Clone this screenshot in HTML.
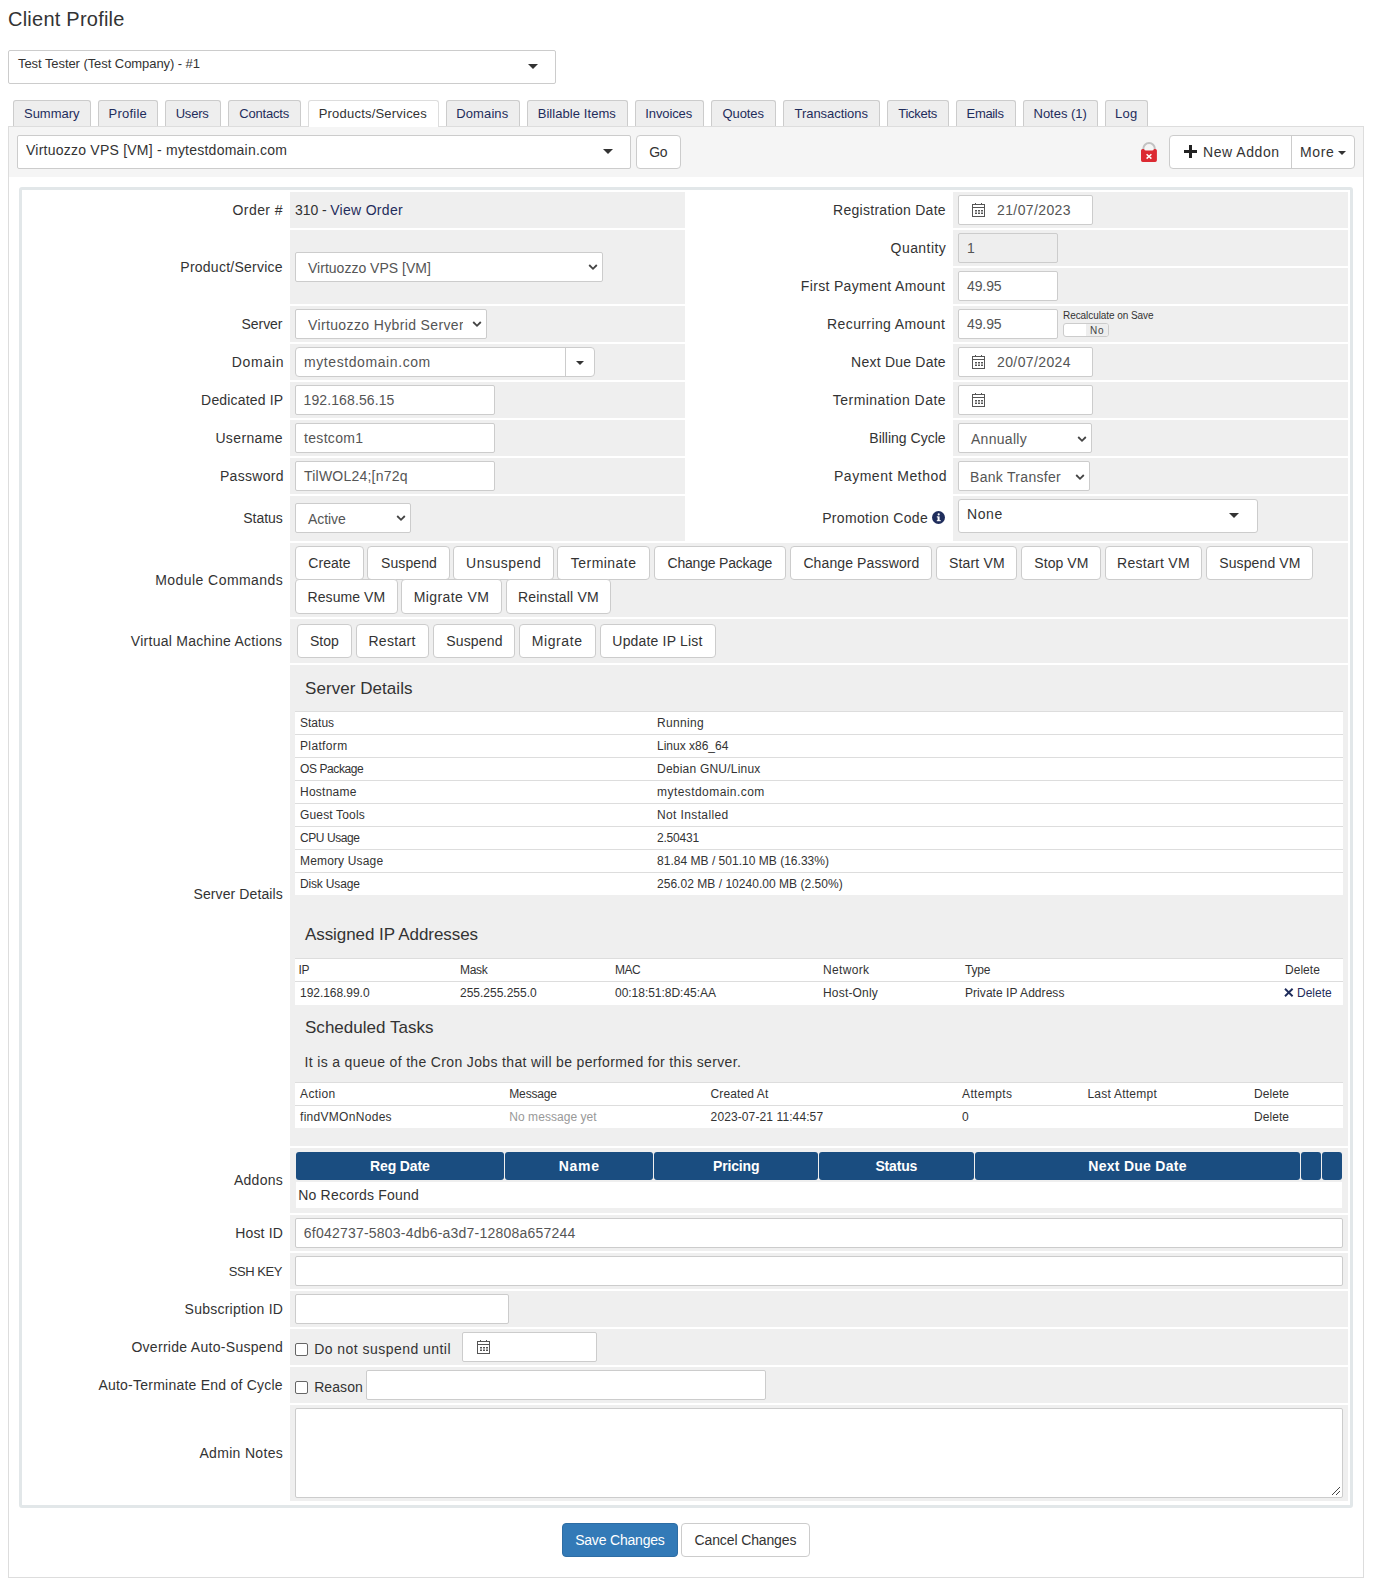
<!DOCTYPE html>
<html><head><meta charset="utf-8"><title>Client Profile</title>
<style>
html,body{margin:0;padding:0;background:#fff;}
body{width:1374px;height:1589px;position:relative;overflow:hidden;font-family:"Liberation Sans", sans-serif;}
.a{position:absolute;box-sizing:border-box;}
.t{position:absolute;white-space:nowrap;font-family:"Liberation Sans", sans-serif;}
svg.a{overflow:visible}
</style></head><body>
<div class="a" style="left:8px;top:50px;width:548px;height:34px;background:#fff;border:1px solid #ccc;border-radius:2px;"></div>
<div class="a" style="left:528px;top:64px;width:0;height:0;border-left:5.0px solid transparent;border-right:5.0px solid transparent;border-top:5px solid #333;"></div>
<div class="a" style="left:8px;top:126px;width:1356px;height:1452px;background:#fff;border:1px solid #ddd;"></div>
<div class="a" style="left:9px;top:127px;width:1354px;height:50px;background:#f5f5f5;"></div>
<div class="a" style="left:13px;top:100px;width:78px;height:27px;background:#eee;border:1px solid #ccc;border-radius:3px 3px 0 0;border-bottom:none;"></div>
<div class="a" style="left:98px;top:100px;width:60px;height:27px;background:#eee;border:1px solid #ccc;border-radius:3px 3px 0 0;border-bottom:none;"></div>
<div class="a" style="left:165px;top:100px;width:56px;height:27px;background:#eee;border:1px solid #ccc;border-radius:3px 3px 0 0;border-bottom:none;"></div>
<div class="a" style="left:228px;top:100px;width:73px;height:27px;background:#eee;border:1px solid #ccc;border-radius:3px 3px 0 0;border-bottom:none;"></div>
<div class="a" style="left:308px;top:100px;width:131px;height:27px;background:#fff;border:1px solid #ddd;border-radius:3px 3px 0 0;border-bottom:none;"></div>
<div class="a" style="left:446px;top:100px;width:74px;height:27px;background:#eee;border:1px solid #ccc;border-radius:3px 3px 0 0;border-bottom:none;"></div>
<div class="a" style="left:527px;top:100px;width:101px;height:27px;background:#eee;border:1px solid #ccc;border-radius:3px 3px 0 0;border-bottom:none;"></div>
<div class="a" style="left:635px;top:100px;width:69px;height:27px;background:#eee;border:1px solid #ccc;border-radius:3px 3px 0 0;border-bottom:none;"></div>
<div class="a" style="left:711px;top:100px;width:65px;height:27px;background:#eee;border:1px solid #ccc;border-radius:3px 3px 0 0;border-bottom:none;"></div>
<div class="a" style="left:783px;top:100px;width:97px;height:27px;background:#eee;border:1px solid #ccc;border-radius:3px 3px 0 0;border-bottom:none;"></div>
<div class="a" style="left:887px;top:100px;width:62px;height:27px;background:#eee;border:1px solid #ccc;border-radius:3px 3px 0 0;border-bottom:none;"></div>
<div class="a" style="left:956px;top:100px;width:60px;height:27px;background:#eee;border:1px solid #ccc;border-radius:3px 3px 0 0;border-bottom:none;"></div>
<div class="a" style="left:1023px;top:100px;width:75px;height:27px;background:#eee;border:1px solid #ccc;border-radius:3px 3px 0 0;border-bottom:none;"></div>
<div class="a" style="left:1105px;top:100px;width:43px;height:27px;background:#eee;border:1px solid #ccc;border-radius:3px 3px 0 0;border-bottom:none;"></div>
<div class="a" style="left:8px;top:126px;width:300px;height:1px;background:#ddd;"></div>
<div class="a" style="left:439px;top:126px;width:925px;height:1px;background:#ddd;"></div>
<div class="a" style="left:17px;top:135px;width:614px;height:34px;background:#fff;border:1px solid #ccc;border-radius:2px;"></div>
<div class="a" style="left:603px;top:149px;width:0;height:0;border-left:5.0px solid transparent;border-right:5.0px solid transparent;border-top:5px solid #333;"></div>
<div class="a" style="left:636px;top:135px;width:45px;height:34px;background:#fff;border:1px solid #ccc;border-radius:4px;box-sizing:border-box;"></div>
<svg class="a" style="left:1139px;top:141px" width="20" height="23" viewBox="0 0 20 23"><path d="M4.3 9.5 V7.9 A5.78 5.78 0 0 1 15.86 7.9 V9.5" fill="none" stroke="#c2c2c2" stroke-width="2"/><path d="M2 9.6 Q2 7.9 3.7 7.9 L5 7.9 Q5.6 9.4 7 9.4 L13 9.4 Q14.4 9.4 15 7.9 L16.2 7.9 Q17.9 7.9 17.9 9.6 L17.9 19.3 Q17.9 21 16.2 21 L3.7 21 Q2 21 2 19.3 Z" fill="#dc2a32"/><path d="M7.6 13.2 L12.4 17.6 M12.4 13.2 L7.6 17.6" stroke="#fff" stroke-width="1.5"/></svg>
<div class="a" style="left:1169px;top:135px;width:186px;height:34px;background:#fff;border:1px solid #ccc;border-radius:4px;"></div>
<div class="a" style="left:1291px;top:135px;width:1px;height:34px;background:#ccc;"></div>
<div class="a" style="left:1184px;top:150px;width:13px;height:3px;background:#222;"></div>
<div class="a" style="left:1189px;top:145px;width:3px;height:13px;background:#222;"></div>
<div class="a" style="left:1338px;top:151px;width:0;height:0;border-left:4.0px solid transparent;border-right:4.0px solid transparent;border-top:4px solid #333;"></div>
<div class="a" style="left:19px;top:187px;width:1334px;height:1321px;background:#fff;border:3px solid #e2e7e9;border-radius:3px;"></div>
<div class="a" style="left:290px;top:192px;width:395px;height:36px;background:#efefef;"></div>
<div class="a" style="left:290px;top:230px;width:395px;height:74px;background:#efefef;"></div>
<div class="a" style="left:290px;top:306px;width:395px;height:36px;background:#efefef;"></div>
<div class="a" style="left:290px;top:344px;width:395px;height:36px;background:#efefef;"></div>
<div class="a" style="left:290px;top:382px;width:395px;height:36px;background:#efefef;"></div>
<div class="a" style="left:290px;top:420px;width:395px;height:36px;background:#efefef;"></div>
<div class="a" style="left:290px;top:458px;width:395px;height:36px;background:#efefef;"></div>
<div class="a" style="left:290px;top:496px;width:395px;height:45px;background:#efefef;"></div>
<div class="a" style="left:953px;top:192px;width:395px;height:36px;background:#efefef;"></div>
<div class="a" style="left:953px;top:230px;width:395px;height:36px;background:#efefef;"></div>
<div class="a" style="left:953px;top:268px;width:395px;height:36px;background:#efefef;"></div>
<div class="a" style="left:953px;top:306px;width:395px;height:36px;background:#efefef;"></div>
<div class="a" style="left:953px;top:344px;width:395px;height:36px;background:#efefef;"></div>
<div class="a" style="left:953px;top:382px;width:395px;height:36px;background:#efefef;"></div>
<div class="a" style="left:953px;top:420px;width:395px;height:36px;background:#efefef;"></div>
<div class="a" style="left:953px;top:458px;width:395px;height:36px;background:#efefef;"></div>
<div class="a" style="left:953px;top:496px;width:395px;height:45px;background:#efefef;"></div>
<div class="a" style="left:290px;top:543px;width:1058px;height:74px;background:#efefef;"></div>
<div class="a" style="left:290px;top:619px;width:1058px;height:44px;background:#efefef;"></div>
<div class="a" style="left:290px;top:665px;width:1058px;height:481px;background:#efefef;"></div>
<div class="a" style="left:290px;top:1148px;width:1058px;height:65px;background:#efefef;"></div>
<div class="a" style="left:290px;top:1215px;width:1058px;height:36px;background:#efefef;"></div>
<div class="a" style="left:290px;top:1253px;width:1058px;height:36px;background:#efefef;"></div>
<div class="a" style="left:290px;top:1291px;width:1058px;height:36px;background:#efefef;"></div>
<div class="a" style="left:290px;top:1329px;width:1058px;height:36px;background:#efefef;"></div>
<div class="a" style="left:290px;top:1367px;width:1058px;height:36px;background:#efefef;"></div>
<div class="a" style="left:290px;top:1405px;width:1058px;height:96px;background:#efefef;"></div>
<svg class="a" style="left:932px;top:511px" width="13" height="13" viewBox="0 0 13 13"><circle cx="6.5" cy="6.5" r="6.5" fill="#1f2d5c"/><rect x="5.6" y="5.4" width="2" height="4.6" fill="#fff"/><rect x="4.8" y="5.4" width="1.2" height="1" fill="#fff"/><rect x="4.8" y="9.2" width="4" height="1" fill="#fff"/><circle cx="6.7" cy="3.4" r="1.05" fill="#fff"/></svg>
<div class="a" style="left:295px;top:252px;width:308px;height:30px;background:#fff;border:1px solid #ccc;border-radius:2px;box-sizing:border-box;"></div>
<svg class="a" style="left:588px;top:263px" width="10" height="8" viewBox="0 0 10 8"><path d="M1.2 2 L5 5.8 L8.8 2" fill="none" stroke="#444" stroke-width="1.8"/></svg>
<div class="a" style="left:295px;top:309px;width:192px;height:30px;background:#fff;border:1px solid #ccc;border-radius:2px;box-sizing:border-box;"></div>
<svg class="a" style="left:472px;top:320px" width="10" height="8" viewBox="0 0 10 8"><path d="M1.2 2 L5 5.8 L8.8 2" fill="none" stroke="#444" stroke-width="1.8"/></svg>
<div class="a" style="left:295px;top:347px;width:300px;height:30px;background:#fff;border:1px solid #ccc;border-radius:4px;box-sizing:border-box;"></div>
<div class="a" style="left:565px;top:347px;width:1px;height:30px;background:#ccc;"></div>
<div class="a" style="left:576px;top:361px;width:0;height:0;border-left:4.0px solid transparent;border-right:4.0px solid transparent;border-top:4px solid #333;"></div>
<div class="a" style="left:295px;top:385px;width:200px;height:30px;background:#fff;border:1px solid #ccc;border-radius:2px;box-sizing:border-box;"></div>
<div class="a" style="left:295px;top:423px;width:200px;height:30px;background:#fff;border:1px solid #ccc;border-radius:2px;box-sizing:border-box;"></div>
<div class="a" style="left:295px;top:461px;width:200px;height:30px;background:#fff;border:1px solid #ccc;border-radius:2px;box-sizing:border-box;"></div>
<div class="a" style="left:295px;top:503px;width:116px;height:30px;background:#fff;border:1px solid #ccc;border-radius:2px;box-sizing:border-box;"></div>
<svg class="a" style="left:396px;top:514px" width="10" height="8" viewBox="0 0 10 8"><path d="M1.2 2 L5 5.8 L8.8 2" fill="none" stroke="#444" stroke-width="1.8"/></svg>
<div class="a" style="left:958px;top:195px;width:135px;height:30px;background:#fff;border:1px solid #ccc;border-radius:2px;box-sizing:border-box;"></div>
<svg class="a" style="left:972px;top:202px" width="13" height="15" viewBox="0 0 13 15" shape-rendering="crispEdges"><rect x="0.5" y="2.5" width="12" height="12" rx="1.2" fill="none" stroke="#555" stroke-width="1"/><rect x="0" y="5" width="13" height="1" fill="#555"/><rect x="3" y="1" width="1" height="2" fill="#555"/><rect x="9" y="1" width="1" height="2" fill="#555"/><rect x="3" y="8" width="2" height="1" fill="#555"/><rect x="5.8" y="8" width="2" height="1" fill="#555"/><rect x="8.6" y="8" width="2" height="1" fill="#555"/><rect x="3" y="11" width="2" height="1" fill="#555"/><rect x="5.8" y="11" width="2" height="1" fill="#555"/><rect x="8.6" y="11" width="2" height="1" fill="#555"/><rect x="3" y="9" width="2" height="2" fill="#555" opacity="0.5"/><rect x="5.8" y="9" width="2" height="2" fill="#555" opacity="0.5"/><rect x="8.6" y="9" width="2" height="2" fill="#555" opacity="0.5"/></svg>
<div class="a" style="left:958px;top:233px;width:100px;height:30px;background:#eee;border:1px solid #ccc;border-radius:2px;box-sizing:border-box;"></div>
<div class="a" style="left:958px;top:271px;width:100px;height:30px;background:#fff;border:1px solid #ccc;border-radius:2px;box-sizing:border-box;"></div>
<div class="a" style="left:958px;top:309px;width:100px;height:30px;background:#fff;border:1px solid #ccc;border-radius:2px;box-sizing:border-box;"></div>
<div class="a" style="left:1063px;top:323px;width:46px;height:14px;background:#fff;border:1px solid #ccc;border-radius:3px;"></div>
<div class="a" style="left:1086px;top:324px;width:22px;height:12px;background:#eee;border-radius:0 2px 2px 0;"></div>
<div class="a" style="left:958px;top:347px;width:135px;height:30px;background:#fff;border:1px solid #ccc;border-radius:2px;box-sizing:border-box;"></div>
<svg class="a" style="left:972px;top:354px" width="13" height="15" viewBox="0 0 13 15" shape-rendering="crispEdges"><rect x="0.5" y="2.5" width="12" height="12" rx="1.2" fill="none" stroke="#555" stroke-width="1"/><rect x="0" y="5" width="13" height="1" fill="#555"/><rect x="3" y="1" width="1" height="2" fill="#555"/><rect x="9" y="1" width="1" height="2" fill="#555"/><rect x="3" y="8" width="2" height="1" fill="#555"/><rect x="5.8" y="8" width="2" height="1" fill="#555"/><rect x="8.6" y="8" width="2" height="1" fill="#555"/><rect x="3" y="11" width="2" height="1" fill="#555"/><rect x="5.8" y="11" width="2" height="1" fill="#555"/><rect x="8.6" y="11" width="2" height="1" fill="#555"/><rect x="3" y="9" width="2" height="2" fill="#555" opacity="0.5"/><rect x="5.8" y="9" width="2" height="2" fill="#555" opacity="0.5"/><rect x="8.6" y="9" width="2" height="2" fill="#555" opacity="0.5"/></svg>
<div class="a" style="left:958px;top:385px;width:135px;height:30px;background:#fff;border:1px solid #ccc;border-radius:2px;box-sizing:border-box;"></div>
<svg class="a" style="left:972px;top:392px" width="13" height="15" viewBox="0 0 13 15" shape-rendering="crispEdges"><rect x="0.5" y="2.5" width="12" height="12" rx="1.2" fill="none" stroke="#555" stroke-width="1"/><rect x="0" y="5" width="13" height="1" fill="#555"/><rect x="3" y="1" width="1" height="2" fill="#555"/><rect x="9" y="1" width="1" height="2" fill="#555"/><rect x="3" y="8" width="2" height="1" fill="#555"/><rect x="5.8" y="8" width="2" height="1" fill="#555"/><rect x="8.6" y="8" width="2" height="1" fill="#555"/><rect x="3" y="11" width="2" height="1" fill="#555"/><rect x="5.8" y="11" width="2" height="1" fill="#555"/><rect x="8.6" y="11" width="2" height="1" fill="#555"/><rect x="3" y="9" width="2" height="2" fill="#555" opacity="0.5"/><rect x="5.8" y="9" width="2" height="2" fill="#555" opacity="0.5"/><rect x="8.6" y="9" width="2" height="2" fill="#555" opacity="0.5"/></svg>
<div class="a" style="left:958px;top:423px;width:134px;height:30px;background:#fff;border:1px solid #ccc;border-radius:2px;box-sizing:border-box;"></div>
<svg class="a" style="left:1077px;top:435px" width="10" height="8" viewBox="0 0 10 8"><path d="M1.2 2 L5 5.8 L8.8 2" fill="none" stroke="#444" stroke-width="1.8"/></svg>
<div class="a" style="left:958px;top:461px;width:132px;height:30px;background:#fff;border:1px solid #ccc;border-radius:2px;box-sizing:border-box;"></div>
<svg class="a" style="left:1075px;top:473px" width="10" height="8" viewBox="0 0 10 8"><path d="M1.2 2 L5 5.8 L8.8 2" fill="none" stroke="#444" stroke-width="1.8"/></svg>
<div class="a" style="left:958px;top:499px;width:300px;height:34px;background:#fff;border:1px solid #ccc;border-radius:3px;box-sizing:border-box;"></div>
<div class="a" style="left:1229px;top:513px;width:0;height:0;border-left:5.5px solid transparent;border-right:5.5px solid transparent;border-top:5px solid #333;"></div>
<div class="a" style="left:295px;top:546px;width:69px;height:34px;background:#fff;border:1px solid #ccc;border-radius:4px;box-sizing:border-box;"></div>
<div class="a" style="left:367px;top:546px;width:83px;height:34px;background:#fff;border:1px solid #ccc;border-radius:4px;box-sizing:border-box;"></div>
<div class="a" style="left:453px;top:546px;width:101px;height:34px;background:#fff;border:1px solid #ccc;border-radius:4px;box-sizing:border-box;"></div>
<div class="a" style="left:557px;top:546px;width:93px;height:34px;background:#fff;border:1px solid #ccc;border-radius:4px;box-sizing:border-box;"></div>
<div class="a" style="left:654px;top:546px;width:132px;height:34px;background:#fff;border:1px solid #ccc;border-radius:4px;box-sizing:border-box;"></div>
<div class="a" style="left:790px;top:546px;width:142px;height:34px;background:#fff;border:1px solid #ccc;border-radius:4px;box-sizing:border-box;"></div>
<div class="a" style="left:936px;top:546px;width:81px;height:34px;background:#fff;border:1px solid #ccc;border-radius:4px;box-sizing:border-box;"></div>
<div class="a" style="left:1021px;top:546px;width:80px;height:34px;background:#fff;border:1px solid #ccc;border-radius:4px;box-sizing:border-box;"></div>
<div class="a" style="left:1105px;top:546px;width:97px;height:34px;background:#fff;border:1px solid #ccc;border-radius:4px;box-sizing:border-box;"></div>
<div class="a" style="left:1206px;top:546px;width:107px;height:34px;background:#fff;border:1px solid #ccc;border-radius:4px;box-sizing:border-box;"></div>
<div class="a" style="left:295px;top:579px;width:103px;height:35px;background:#fff;border:1px solid #ccc;border-radius:4px;box-sizing:border-box;"></div>
<div class="a" style="left:401px;top:579px;width:101px;height:35px;background:#fff;border:1px solid #ccc;border-radius:4px;box-sizing:border-box;"></div>
<div class="a" style="left:506px;top:579px;width:105px;height:35px;background:#fff;border:1px solid #ccc;border-radius:4px;box-sizing:border-box;"></div>
<div class="a" style="left:297px;top:624px;width:55px;height:34px;background:#fff;border:1px solid #ccc;border-radius:4px;box-sizing:border-box;"></div>
<div class="a" style="left:356px;top:624px;width:73px;height:34px;background:#fff;border:1px solid #ccc;border-radius:4px;box-sizing:border-box;"></div>
<div class="a" style="left:433px;top:624px;width:82px;height:34px;background:#fff;border:1px solid #ccc;border-radius:4px;box-sizing:border-box;"></div>
<div class="a" style="left:519px;top:624px;width:77px;height:34px;background:#fff;border:1px solid #ccc;border-radius:4px;box-sizing:border-box;"></div>
<div class="a" style="left:600px;top:624px;width:116px;height:34px;background:#fff;border:1px solid #ccc;border-radius:4px;box-sizing:border-box;"></div>
<div class="a" style="left:295px;top:711px;width:1048px;height:184px;background:#fff;"></div>
<div class="a" style="left:295px;top:711px;width:1048px;height:1px;background:#ddd;"></div>
<div class="a" style="left:295px;top:734px;width:1048px;height:1px;background:#ddd;"></div>
<div class="a" style="left:295px;top:757px;width:1048px;height:1px;background:#ddd;"></div>
<div class="a" style="left:295px;top:780px;width:1048px;height:1px;background:#ddd;"></div>
<div class="a" style="left:295px;top:803px;width:1048px;height:1px;background:#ddd;"></div>
<div class="a" style="left:295px;top:826px;width:1048px;height:1px;background:#ddd;"></div>
<div class="a" style="left:295px;top:849px;width:1048px;height:1px;background:#ddd;"></div>
<div class="a" style="left:295px;top:872px;width:1048px;height:1px;background:#ddd;"></div>
<div class="a" style="left:295px;top:958px;width:1048px;height:47px;background:#fff;"></div>
<div class="a" style="left:295px;top:958px;width:1048px;height:1px;background:#ddd;"></div>
<div class="a" style="left:295px;top:981px;width:1048px;height:1px;background:#ddd;"></div>
<svg class="a" style="left:1284px;top:988px" width="10" height="9" viewBox="0 0 10 9"><path d="M1 0.8 L8.6 8.2 M8.6 0.8 L1 8.2" stroke="#1f2d5c" stroke-width="1.9"/></svg>
<div class="a" style="left:295px;top:1082px;width:1048px;height:46px;background:#fff;"></div>
<div class="a" style="left:295px;top:1082px;width:1048px;height:1px;background:#ddd;"></div>
<div class="a" style="left:295px;top:1105px;width:1048px;height:1px;background:#ddd;"></div>
<div class="a" style="left:296px;top:1152px;width:208px;height:28px;background:#1a4d80;border-radius:3px;"></div>
<div class="a" style="left:505px;top:1152px;width:148px;height:28px;background:#1a4d80;border-radius:3px;"></div>
<div class="a" style="left:654px;top:1152px;width:164px;height:28px;background:#1a4d80;border-radius:3px;"></div>
<div class="a" style="left:819px;top:1152px;width:155px;height:28px;background:#1a4d80;border-radius:3px;"></div>
<div class="a" style="left:975px;top:1152px;width:325px;height:28px;background:#1a4d80;border-radius:3px;"></div>
<div class="a" style="left:1301px;top:1152px;width:20px;height:28px;background:#1a4d80;border-radius:3px;"></div>
<div class="a" style="left:1322px;top:1152px;width:20px;height:28px;background:#1a4d80;border-radius:3px;"></div>
<div class="a" style="left:296px;top:1182px;width:1046px;height:26px;background:#fff;"></div>
<div class="a" style="left:295px;top:1218px;width:1048px;height:30px;background:#fff;border:1px solid #ccc;border-radius:2px;box-sizing:border-box;"></div>
<div class="a" style="left:295px;top:1256px;width:1048px;height:30px;background:#fff;border:1px solid #ccc;border-radius:2px;box-sizing:border-box;"></div>
<div class="a" style="left:295px;top:1294px;width:214px;height:30px;background:#fff;border:1px solid #ccc;border-radius:2px;box-sizing:border-box;"></div>
<div class="a" style="left:295px;top:1343px;width:13px;height:13px;background:#fff;border:1px solid #666;border-radius:2px;"></div>
<div class="a" style="left:462px;top:1332px;width:135px;height:30px;background:#fff;border:1px solid #ccc;border-radius:2px;box-sizing:border-box;"></div>
<svg class="a" style="left:477px;top:1339px" width="13" height="15" viewBox="0 0 13 15" shape-rendering="crispEdges"><rect x="0.5" y="2.5" width="12" height="12" rx="1.2" fill="none" stroke="#555" stroke-width="1"/><rect x="0" y="5" width="13" height="1" fill="#555"/><rect x="3" y="1" width="1" height="2" fill="#555"/><rect x="9" y="1" width="1" height="2" fill="#555"/><rect x="3" y="8" width="2" height="1" fill="#555"/><rect x="5.8" y="8" width="2" height="1" fill="#555"/><rect x="8.6" y="8" width="2" height="1" fill="#555"/><rect x="3" y="11" width="2" height="1" fill="#555"/><rect x="5.8" y="11" width="2" height="1" fill="#555"/><rect x="8.6" y="11" width="2" height="1" fill="#555"/><rect x="3" y="9" width="2" height="2" fill="#555" opacity="0.5"/><rect x="5.8" y="9" width="2" height="2" fill="#555" opacity="0.5"/><rect x="8.6" y="9" width="2" height="2" fill="#555" opacity="0.5"/></svg>
<div class="a" style="left:295px;top:1381px;width:13px;height:13px;background:#fff;border:1px solid #666;border-radius:2px;"></div>
<div class="a" style="left:366px;top:1370px;width:400px;height:30px;background:#fff;border:1px solid #ccc;border-radius:2px;box-sizing:border-box;"></div>
<div class="a" style="left:295px;top:1408px;width:1048px;height:90px;background:#fff;border:1px solid #ccc;border-radius:2px;box-sizing:border-box;"></div>
<svg class="a" style="left:1331px;top:1486px" width="10" height="10" viewBox="0 0 10 10"><path d="M9 1 L1 9 M9 5 L5 9" stroke="#444" stroke-width="1"/></svg>
<div class="a" style="left:562px;top:1523px;width:116px;height:34px;background:#337ab7;border:1px solid #2e6da4;border-radius:4px;box-sizing:border-box;"></div>
<div class="a" style="left:681px;top:1523px;width:129px;height:34px;background:#fff;border:1px solid #ccc;border-radius:4px;box-sizing:border-box;"></div>
<div class="t" style="left:8.00px;top:9px;font-size:20px;line-height:20px;color:#333;letter-spacing:0.234px;">Client Profile</div>
<div class="t" style="left:18.00px;top:57px;font-size:13px;line-height:13px;color:#333;letter-spacing:-0.067px;">Test Tester (Test Company) - #1</div>
<div class="t" style="left:24.00px;top:107px;font-size:13px;line-height:13px;color:#1f2d5c;letter-spacing:-0.020px;">Summary</div>
<div class="t" style="left:108.50px;top:107px;font-size:13px;line-height:13px;color:#1f2d5c;letter-spacing:0.230px;">Profile</div>
<div class="t" style="left:175.70px;top:107px;font-size:13px;line-height:13px;color:#1f2d5c;letter-spacing:-0.212px;">Users</div>
<div class="t" style="left:239.25px;top:107px;font-size:13px;line-height:13px;color:#1f2d5c;letter-spacing:-0.186px;">Contacts</div>
<div class="t" style="left:318.70px;top:107px;font-size:13px;line-height:13px;color:#333;letter-spacing:0.209px;">Products/Services</div>
<div class="t" style="left:456.30px;top:107px;font-size:13px;line-height:13px;color:#1f2d5c;letter-spacing:0.101px;">Domains</div>
<div class="t" style="left:537.65px;top:107px;font-size:13px;line-height:13px;color:#1f2d5c;letter-spacing:0.069px;">Billable Items</div>
<div class="t" style="left:645.25px;top:107px;font-size:13px;line-height:13px;color:#1f2d5c;letter-spacing:-0.099px;">Invoices</div>
<div class="t" style="left:722.60px;top:107px;font-size:13px;line-height:13px;color:#1f2d5c;letter-spacing:-0.123px;">Quotes</div>
<div class="t" style="left:794.50px;top:107px;font-size:13px;line-height:13px;color:#1f2d5c;letter-spacing:-0.040px;">Transactions</div>
<div class="t" style="left:898.25px;top:107px;font-size:13px;line-height:13px;color:#1f2d5c;letter-spacing:-0.281px;">Tickets</div>
<div class="t" style="left:966.60px;top:107px;font-size:13px;line-height:13px;color:#1f2d5c;letter-spacing:-0.341px;">Emails</div>
<div class="t" style="left:1033.55px;top:107px;font-size:13px;line-height:13px;color:#1f2d5c;letter-spacing:-0.029px;">Notes (1)</div>
<div class="t" style="left:1115.10px;top:107px;font-size:13px;line-height:13px;color:#1f2d5c;letter-spacing:0.170px;">Log</div>
<div class="t" style="left:26.00px;top:143px;font-size:14px;line-height:14px;color:#333;letter-spacing:0.232px;">Virtuozzo VPS [VM] - mytestdomain.com</div>
<div class="t" style="left:649.28px;top:145px;font-size:14px;line-height:14px;color:#333;letter-spacing:-0.450px;">Go</div>
<div class="t" style="left:1203.00px;top:145px;font-size:14px;line-height:14px;color:#333;letter-spacing:0.551px;">New Addon</div>
<div class="t" style="left:1300.00px;top:145px;font-size:14px;line-height:14px;color:#333;letter-spacing:0.630px;">More</div>
<div class="t" style="left:232.50px;top:203px;font-size:14px;line-height:14px;color:#333;letter-spacing:0.437px;">Order #</div>
<div class="t" style="left:180.30px;top:260px;font-size:14px;line-height:14px;color:#333;letter-spacing:0.248px;">Product/Service</div>
<div class="t" style="left:241.60px;top:317px;font-size:14px;line-height:14px;color:#333;letter-spacing:-0.074px;">Server</div>
<div class="t" style="left:231.70px;top:355px;font-size:14px;line-height:14px;color:#333;letter-spacing:0.729px;">Domain</div>
<div class="t" style="left:201.10px;top:393px;font-size:14px;line-height:14px;color:#333;letter-spacing:0.171px;">Dedicated IP</div>
<div class="t" style="left:215.40px;top:431px;font-size:14px;line-height:14px;color:#333;letter-spacing:0.372px;">Username</div>
<div class="t" style="left:219.90px;top:469px;font-size:14px;line-height:14px;color:#333;letter-spacing:0.317px;">Password</div>
<div class="t" style="left:243.20px;top:511px;font-size:14px;line-height:14px;color:#333;letter-spacing:-0.018px;">Status</div>
<div class="t" style="left:833.10px;top:203px;font-size:14px;line-height:14px;color:#333;letter-spacing:0.270px;">Registration Date</div>
<div class="t" style="left:890.60px;top:241px;font-size:14px;line-height:14px;color:#333;letter-spacing:0.437px;">Quantity</div>
<div class="t" style="left:800.80px;top:279px;font-size:14px;line-height:14px;color:#333;letter-spacing:0.337px;">First Payment Amount</div>
<div class="t" style="left:827.10px;top:317px;font-size:14px;line-height:14px;color:#333;letter-spacing:0.384px;">Recurring Amount</div>
<div class="t" style="left:851.10px;top:355px;font-size:14px;line-height:14px;color:#333;letter-spacing:0.222px;">Next Due Date</div>
<div class="t" style="left:832.80px;top:393px;font-size:14px;line-height:14px;color:#333;letter-spacing:0.464px;">Termination Date</div>
<div class="t" style="left:869.30px;top:431px;font-size:14px;line-height:14px;color:#333;">Billing Cycle</div>
<div class="t" style="left:834.00px;top:469px;font-size:14px;line-height:14px;color:#333;letter-spacing:0.519px;">Payment Method</div>
<div class="t" style="left:822.20px;top:511px;font-size:14px;line-height:14px;color:#333;letter-spacing:0.340px;">Promotion Code</div>
<div class="t" style="left:155.20px;top:573px;font-size:14px;line-height:14px;color:#333;letter-spacing:0.444px;">Module Commands</div>
<div class="t" style="left:130.80px;top:634px;font-size:14px;line-height:14px;color:#333;letter-spacing:0.271px;">Virtual Machine Actions</div>
<div class="t" style="left:193.50px;top:887px;font-size:14px;line-height:14px;color:#333;letter-spacing:0.106px;">Server Details</div>
<div class="t" style="left:233.90px;top:1173px;font-size:14px;line-height:14px;color:#333;letter-spacing:0.284px;">Addons</div>
<div class="t" style="left:235.20px;top:1226px;font-size:14px;line-height:14px;color:#333;letter-spacing:0.172px;">Host ID</div>
<div class="t" style="left:184.60px;top:1302px;font-size:14px;line-height:14px;color:#333;letter-spacing:0.241px;">Subscription ID</div>
<div class="t" style="left:131.40px;top:1340px;font-size:14px;line-height:14px;color:#333;letter-spacing:0.294px;">Override Auto-Suspend</div>
<div class="t" style="left:98.40px;top:1378px;font-size:14px;line-height:14px;color:#333;letter-spacing:0.231px;">Auto-Terminate End of Cycle</div>
<div class="t" style="left:199.40px;top:1446px;font-size:14px;line-height:14px;color:#333;letter-spacing:0.326px;">Admin Notes</div>
<div class="t" style="left:228.82px;top:1265px;font-size:13px;line-height:13px;color:#333;letter-spacing:-0.450px;">SSH KEY</div>
<div class="t" style="left:295.00px;top:203px;font-size:14px;line-height:14px;color:#333;letter-spacing:-0.062px;">310 -</div>
<div class="t" style="left:330.20px;top:203px;font-size:14px;line-height:14px;color:#1f2d5c;letter-spacing:0.299px;">View Order</div>
<div class="t" style="left:308.00px;top:261px;font-size:14px;line-height:14px;color:#555;letter-spacing:0.012px;">Virtuozzo VPS [VM]</div>
<div class="t" style="left:308.00px;top:318px;font-size:14px;line-height:14px;color:#555;letter-spacing:0.368px;width:155px;overflow:hidden;">Virtuozzo Hybrid Server</div>
<div class="t" style="left:304.00px;top:355px;font-size:14px;line-height:14px;color:#555;letter-spacing:0.585px;">mytestdomain.com</div>
<div class="t" style="left:303.50px;top:393px;font-size:14px;line-height:14px;color:#555;letter-spacing:0.113px;">192.168.56.15</div>
<div class="t" style="left:304.00px;top:431px;font-size:14px;line-height:14px;color:#555;letter-spacing:0.327px;">testcom1</div>
<div class="t" style="left:304.00px;top:469px;font-size:14px;line-height:14px;color:#555;letter-spacing:0.219px;">TilWOL24;[n72q</div>
<div class="t" style="left:308.00px;top:512px;font-size:14px;line-height:14px;color:#555;letter-spacing:-0.088px;">Active</div>
<div class="t" style="left:997.00px;top:203px;font-size:14px;line-height:14px;color:#555;letter-spacing:0.391px;">21/07/2023</div>
<div class="t" style="left:967.00px;top:241px;font-size:14px;line-height:14px;color:#555;">1</div>
<div class="t" style="left:967.00px;top:279px;font-size:14px;line-height:14px;color:#555;letter-spacing:-0.112px;">49.95</div>
<div class="t" style="left:967.00px;top:317px;font-size:14px;line-height:14px;color:#555;letter-spacing:-0.112px;">49.95</div>
<div class="t" style="left:1063.00px;top:311px;font-size:10px;line-height:10px;color:#333;letter-spacing:-0.065px;">Recalculate on Save</div>
<div class="t" style="left:1090.06px;top:326px;font-size:10px;line-height:10px;color:#444;letter-spacing:0.661px;">No</div>
<div class="t" style="left:997.00px;top:355px;font-size:14px;line-height:14px;color:#555;letter-spacing:0.391px;">20/07/2024</div>
<div class="t" style="left:971.00px;top:432px;font-size:14px;line-height:14px;color:#555;letter-spacing:0.285px;">Annually</div>
<div class="t" style="left:970.00px;top:470px;font-size:14px;line-height:14px;color:#555;letter-spacing:0.296px;">Bank Transfer</div>
<div class="t" style="left:967.00px;top:507px;font-size:14px;line-height:14px;color:#333;letter-spacing:0.572px;">None</div>
<div class="t" style="left:308.35px;top:556px;font-size:14px;line-height:14px;color:#333;letter-spacing:0.013px;">Create</div>
<div class="t" style="left:381.00px;top:556px;font-size:14px;line-height:14px;color:#333;letter-spacing:0.086px;">Suspend</div>
<div class="t" style="left:466.10px;top:556px;font-size:14px;line-height:14px;color:#333;letter-spacing:0.470px;">Unsuspend</div>
<div class="t" style="left:570.85px;top:556px;font-size:14px;line-height:14px;color:#333;letter-spacing:0.452px;">Terminate</div>
<div class="t" style="left:667.50px;top:556px;font-size:14px;line-height:14px;color:#333;letter-spacing:-0.202px;">Change Package</div>
<div class="t" style="left:803.40px;top:556px;font-size:14px;line-height:14px;color:#333;letter-spacing:0.113px;">Change Password</div>
<div class="t" style="left:949.00px;top:556px;font-size:14px;line-height:14px;color:#333;letter-spacing:0.172px;">Start VM</div>
<div class="t" style="left:1034.25px;top:556px;font-size:14px;line-height:14px;color:#333;letter-spacing:0.079px;">Stop VM</div>
<div class="t" style="left:1117.10px;top:556px;font-size:14px;line-height:14px;color:#333;letter-spacing:0.272px;">Restart VM</div>
<div class="t" style="left:1219.20px;top:556px;font-size:14px;line-height:14px;color:#333;letter-spacing:0.123px;">Suspend VM</div>
<div class="t" style="left:307.50px;top:590px;font-size:14px;line-height:14px;color:#333;letter-spacing:0.080px;">Resume VM</div>
<div class="t" style="left:413.75px;top:590px;font-size:14px;line-height:14px;color:#333;letter-spacing:0.399px;">Migrate VM</div>
<div class="t" style="left:518.00px;top:590px;font-size:14px;line-height:14px;color:#333;letter-spacing:0.189px;">Reinstall VM</div>
<div class="t" style="left:309.95px;top:634px;font-size:14px;line-height:14px;color:#333;letter-spacing:0.029px;">Stop</div>
<div class="t" style="left:368.45px;top:634px;font-size:14px;line-height:14px;color:#333;letter-spacing:0.311px;">Restart</div>
<div class="t" style="left:446.15px;top:634px;font-size:14px;line-height:14px;color:#333;letter-spacing:0.203px;">Suspend</div>
<div class="t" style="left:531.85px;top:634px;font-size:14px;line-height:14px;color:#333;letter-spacing:0.567px;">Migrate</div>
<div class="t" style="left:612.35px;top:634px;font-size:14px;line-height:14px;color:#333;letter-spacing:0.173px;">Update IP List</div>
<div class="t" style="left:305.00px;top:680px;font-size:17px;line-height:17px;color:#333;letter-spacing:0.057px;">Server Details</div>
<div class="t" style="left:300.00px;top:717px;font-size:12px;line-height:12px;color:#333;letter-spacing:0.016px;">Status</div>
<div class="t" style="left:657.00px;top:717px;font-size:12px;line-height:12px;color:#333;letter-spacing:0.329px;">Running</div>
<div class="t" style="left:300.00px;top:740px;font-size:12px;line-height:12px;color:#333;letter-spacing:0.360px;">Platform</div>
<div class="t" style="left:657.00px;top:740px;font-size:12px;line-height:12px;color:#333;">Linux x86_64</div>
<div class="t" style="left:300.00px;top:763px;font-size:12px;line-height:12px;color:#333;letter-spacing:-0.411px;">OS Package</div>
<div class="t" style="left:657.00px;top:763px;font-size:12px;line-height:12px;color:#333;letter-spacing:0.217px;">Debian GNU/Linux</div>
<div class="t" style="left:300.00px;top:786px;font-size:12px;line-height:12px;color:#333;letter-spacing:0.255px;">Hostname</div>
<div class="t" style="left:657.00px;top:786px;font-size:12px;line-height:12px;color:#333;letter-spacing:0.440px;">mytestdomain.com</div>
<div class="t" style="left:300.00px;top:809px;font-size:12px;line-height:12px;color:#333;letter-spacing:0.164px;">Guest Tools</div>
<div class="t" style="left:657.00px;top:809px;font-size:12px;line-height:12px;color:#333;letter-spacing:0.373px;">Not Installed</div>
<div class="t" style="left:300.00px;top:832px;font-size:12px;line-height:12px;color:#333;letter-spacing:-0.435px;">CPU Usage</div>
<div class="t" style="left:657.00px;top:832px;font-size:12px;line-height:12px;color:#333;letter-spacing:-0.217px;">2.50431</div>
<div class="t" style="left:300.00px;top:855px;font-size:12px;line-height:12px;color:#333;letter-spacing:0.156px;">Memory Usage</div>
<div class="t" style="left:657.00px;top:855px;font-size:12px;line-height:12px;color:#333;letter-spacing:0.020px;">81.84 MB / 501.10 MB (16.33%)</div>
<div class="t" style="left:300.00px;top:878px;font-size:12px;line-height:12px;color:#333;letter-spacing:-0.164px;">Disk Usage</div>
<div class="t" style="left:657.00px;top:878px;font-size:12px;line-height:12px;color:#333;letter-spacing:0.031px;">256.02 MB / 10240.00 MB (2.50%)</div>
<div class="t" style="left:305.00px;top:926px;font-size:17px;line-height:17px;color:#333;letter-spacing:-0.073px;">Assigned IP Addresses</div>
<div class="t" style="left:298.50px;top:964px;font-size:12px;line-height:12px;color:#333;letter-spacing:-0.450px;">IP</div>
<div class="t" style="left:460.00px;top:964px;font-size:12px;line-height:12px;color:#333;letter-spacing:-0.323px;">Mask</div>
<div class="t" style="left:615.00px;top:964px;font-size:12px;line-height:12px;color:#333;letter-spacing:-0.450px;">MAC</div>
<div class="t" style="left:823.00px;top:964px;font-size:12px;line-height:12px;color:#333;letter-spacing:0.348px;">Network</div>
<div class="t" style="left:965.00px;top:964px;font-size:12px;line-height:12px;color:#333;letter-spacing:-0.181px;">Type</div>
<div class="t" style="left:1285.00px;top:964px;font-size:12px;line-height:12px;color:#333;letter-spacing:0.037px;">Delete</div>
<div class="t" style="left:300.00px;top:987px;font-size:12px;line-height:12px;color:#333;letter-spacing:-0.045px;">192.168.99.0</div>
<div class="t" style="left:460.00px;top:987px;font-size:12px;line-height:12px;color:#333;letter-spacing:-0.006px;">255.255.255.0</div>
<div class="t" style="left:615.00px;top:987px;font-size:12px;line-height:12px;color:#333;letter-spacing:-0.025px;">00:18:51:8D:45:AA</div>
<div class="t" style="left:823.00px;top:987px;font-size:12px;line-height:12px;color:#333;letter-spacing:0.182px;">Host-Only</div>
<div class="t" style="left:965.00px;top:987px;font-size:12px;line-height:12px;color:#333;letter-spacing:0.054px;">Private IP Address</div>
<div class="t" style="left:1297.00px;top:987px;font-size:12px;line-height:12px;color:#1f2d5c;">Delete</div>
<div class="t" style="left:305.00px;top:1019px;font-size:17px;line-height:17px;color:#333;letter-spacing:0.027px;">Scheduled Tasks</div>
<div class="t" style="left:304.50px;top:1055px;font-size:14px;line-height:14px;color:#333;letter-spacing:0.347px;">It is a queue of the Cron Jobs that will be performed for this server.</div>
<div class="t" style="left:300.00px;top:1088px;font-size:12px;line-height:12px;color:#333;letter-spacing:0.384px;">Action</div>
<div class="t" style="left:509.30px;top:1088px;font-size:12px;line-height:12px;color:#333;letter-spacing:-0.170px;">Message</div>
<div class="t" style="left:710.60px;top:1088px;font-size:12px;line-height:12px;color:#333;letter-spacing:0.108px;">Created At</div>
<div class="t" style="left:962.00px;top:1088px;font-size:12px;line-height:12px;color:#333;letter-spacing:0.393px;">Attempts</div>
<div class="t" style="left:1087.40px;top:1088px;font-size:12px;line-height:12px;color:#333;letter-spacing:0.243px;">Last Attempt</div>
<div class="t" style="left:1254.00px;top:1088px;font-size:12px;line-height:12px;color:#333;letter-spacing:0.057px;">Delete</div>
<div class="t" style="left:300.00px;top:1111px;font-size:12px;line-height:12px;color:#333;letter-spacing:0.296px;">findVMOnNodes</div>
<div class="t" style="left:509.30px;top:1111px;font-size:12px;line-height:12px;color:#999;letter-spacing:0.048px;">No message yet</div>
<div class="t" style="left:710.60px;top:1111px;font-size:12px;line-height:12px;color:#333;letter-spacing:0.108px;">2023-07-21 11:44:57</div>
<div class="t" style="left:962.00px;top:1111px;font-size:12px;line-height:12px;color:#333;">0</div>
<div class="t" style="left:1254.00px;top:1111px;font-size:12px;line-height:12px;color:#333;letter-spacing:0.057px;">Delete</div>
<div class="t" style="left:370.10px;top:1159px;font-size:14px;line-height:14px;color:#fff;letter-spacing:-0.157px;font-weight:700;">Reg Date</div>
<div class="t" style="left:558.70px;top:1159px;font-size:14px;line-height:14px;color:#fff;letter-spacing:0.752px;font-weight:700;">Name</div>
<div class="t" style="left:713.00px;top:1159px;font-size:14px;line-height:14px;color:#fff;letter-spacing:-0.151px;font-weight:700;">Pricing</div>
<div class="t" style="left:875.45px;top:1159px;font-size:14px;line-height:14px;color:#fff;letter-spacing:-0.180px;font-weight:700;">Status</div>
<div class="t" style="left:1088.25px;top:1159px;font-size:14px;line-height:14px;color:#fff;letter-spacing:0.281px;font-weight:700;">Next Due Date</div>
<div class="t" style="left:298.20px;top:1188px;font-size:14px;line-height:14px;color:#333;letter-spacing:0.212px;">No Records Found</div>
<div class="t" style="left:303.80px;top:1226px;font-size:14px;line-height:14px;color:#555;letter-spacing:0.214px;">6f042737-5803-4db6-a3d7-12808a657244</div>
<div class="t" style="left:314.20px;top:1342px;font-size:14px;line-height:14px;color:#333;letter-spacing:0.456px;">Do not suspend until</div>
<div class="t" style="left:314.20px;top:1380px;font-size:14px;line-height:14px;color:#333;letter-spacing:0.066px;">Reason</div>
<div class="t" style="left:575.15px;top:1533px;font-size:14px;line-height:14px;color:#fff;letter-spacing:-0.195px;">Save Changes</div>
<div class="t" style="left:694.55px;top:1533px;font-size:14px;line-height:14px;color:#333;letter-spacing:-0.124px;">Cancel Changes</div>
</body></html>
